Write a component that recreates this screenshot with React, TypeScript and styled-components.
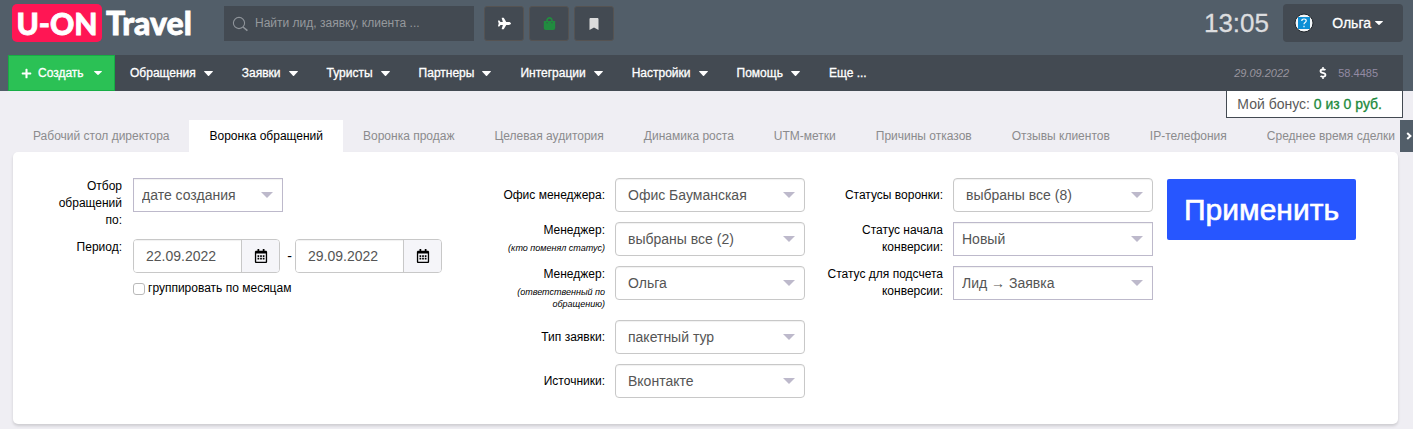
import React from "react";
import styled, { createGlobalStyle, css } from "styled-components";
import { FaPlane, FaShoppingBag, FaBookmark, FaPlus, FaRegCalendarAlt, FaDollarSign } from "react-icons/fa";

const GlobalStyle = createGlobalStyle`
  *, *::before, *::after { box-sizing: border-box; }
  body {
    margin: 0;
    background: #efeef3;
    color: #000;
    font: 12px/17px "Liberation Sans", Arial, sans-serif;
  }
  button, input, select { font: inherit; color: inherit; margin: 0; }
  a { color: inherit; text-decoration: none; }
`;

const Header = styled.header`
  position: relative;
  background: #525e69;
`;

const TopBar = styled.div`
  display: flex;
  align-items: flex-start;
  height: 55px;
  padding: 4px 10px 0 12px;
`;

const Logo = styled.a`
  display: flex;
  align-items: center;
  flex: 0 0 212px;
  gap: 4px;
  height: 38px;
  color: #fff;
  font: 900 32px/38px Lato, sans-serif;
  -webkit-text-stroke: 0.8px;
`;

const LogoBadge = styled.span`
  width: 90px;
  border-radius: 5px;
  background: #ff1654;
  font-size: 30px;
  text-align: center;
`;

const Search = styled.label`
  display: flex;
  align-items: center;
  flex: 0 1 250px;
  gap: 6px;
  height: 35px;
  margin: 2px 10px 0 0;
  padding: 0 8px;
  background: #434a52;
  color: #8f949a;
`;

const SearchInput = styled.input`
  flex: 1;
  min-width: 0;
  padding: 0;
  border: 0;
  outline: 0;
  background: none;
  &::placeholder { color: #96999d; opacity: 1; }
`;

const QuickActions = styled.div`
  display: flex;
  gap: 5px;
  margin-top: 2px;
`;

const QuickButton = styled.button<{ $tone: string }>`
  display: flex;
  align-items: center;
  justify-content: center;
  width: 40px;
  height: 35px;
  padding: 0;
  border: 1px solid #555352;
  border-radius: 3px;
  background: #434a52;
  color: ${(p) => p.$tone};
`;

const Clock = styled.time`
  margin: 0 14px 0 auto;
  color: #dcdddf;
  font-size: 26px;
  line-height: 38px;
  -webkit-text-stroke: 0.3px;
`;

const UserButton = styled.button`
  display: flex;
  align-items: center;
  width: 120px;
  height: 38px;
  padding: 0 20px 0 11px;
  border: 0;
  border-radius: 4px;
  background: #434a52;
  color: #fff;
  font-size: 14px;
  -webkit-text-stroke: 0.3px;
`;

const UserName = styled.span`
  margin: 0 4px 0 auto;
`;

const NavBar = styled.nav`
  display: flex;
  align-items: stretch;
  height: 36px;
  margin: 0 10px 0 8px;
  background: #434a52;
  color: #fff;
`;

const CreateButton = styled.button`
  display: flex;
  align-items: center;
  width: 107px;
  padding: 0 12px;
  border: 1px solid #17ad45;
  background: #2bc155;
  gap: 6px;
  -webkit-text-stroke: 0.3px;
  & > :last-child { margin-left: auto; }
`;

const NavLink = styled.a`
  display: flex;
  align-items: center;
  gap: 8px;
  padding: 0 14px 0 15px;
  white-space: nowrap;
  -webkit-text-stroke: 0.3px;
`;

const Rates = styled.div`
  display: flex;
  align-items: center;
  margin-left: auto;
  padding-right: 25px;
  color: #99959f;
  font-size: 11px;
`;

const RateDate = styled.em`
  margin-right: 28px;
`;

const Currency = styled.span`
  display: flex;
  margin-right: 9px;
  color: #fff;
`;

const RateValue = styled.span`
  color: #938ba3;
`;

const Bonus = styled.div`
  position: absolute;
  top: 100%;
  right: 10px;
  padding: 0 20px 0 10px;
  border: 1px solid #434a52;
  border-top: 0;
  background: #fff;
  color: #5a5a5a;
  font-size: 14px;
  line-height: 26px;
  b { color: #1d8a3c; font-weight: 400; -webkit-text-stroke: 0.3px; }
`;

const TabStrip = styled.nav`
  display: flex;
  height: 32px;
  margin-top: 29px;
  padding-left: 13px;
`;

const TabList = styled.div`
  display: flex;
  flex: 1;
  min-width: 0;
  overflow: hidden;
`;

const Tab = styled.a<{ $active?: boolean }>`
  flex: none;
  padding: 0 20px;
  color: ${(p) => (p.$active ? "#000" : "#8b8b8d")};
  background: ${(p) => (p.$active ? "#fff" : "transparent")};
  line-height: 32px;
  white-space: nowrap;
`;

const TabScroll = styled.button`
  display: flex;
  align-items: center;
  justify-content: center;
  flex: 0 0 13px;
  padding: 0 0 0 4px;
  border: 0;
  background: #525e69;
  color: #fff;
`;

const Panel = styled.form`
  display: grid;
  grid-template-columns: 450fr 342fr 348fr 245fr;
  align-items: start;
  min-height: 272px;
  margin: 0 15px 5px 13px;
  padding: 26px 0;
  border-radius: 5px;
  background: #fff;
  box-shadow: 0 2px 3px rgba(0, 0, 0, 0.14);
`;

const Column = styled.div`
  display: grid;
  gap: 10px;
`;

const Row = styled.div<{ $control: number }>`
  display: grid;
  grid-template-columns: minmax(0, 1fr) ${(p) => p.$control}px;
  column-gap: 10px;
  padding-left: 20px;
  align-items: start;
`;

const Label = styled.label<{ $lines?: number }>`
  padding-top: ${(p) => (p.$lines === 1 ? 9 : 0)}px;
  text-align: right;
`;

const Hint = styled.em`
  display: block;
  font-size: 9px;
  line-height: 12px;
  padding-top: 3px;
`;

const PeriodColumn = styled.div`
  display: grid;
  grid-template-columns: 75px max-content;
  align-items: start;
  gap: 10px 11px;
  padding-left: 34px;
`;

const SelectBox = styled.span<{ $width?: number }>`
  display: grid;
  grid-template-columns: minmax(0, 1fr) auto;
  align-items: center;
  ${(p) => p.$width && css`width: ${p.$width}px;`}
  & > svg {
    grid-area: 1 / 2;
    margin-right: 10px;
    pointer-events: none;
  }
`;

const NativeSelect = styled.select<{ $square?: boolean }>`
  grid-area: 1 / 1 / 2 / 3;
  appearance: none;
  width: 100%;
  height: 34px;
  padding: 0 26px 0 ${(p) => (p.$square ? 8 : 12)}px;
  border: 1px solid ${(p) => (p.$square ? "#bdb9cb" : "#c8c8c8")};
  border-radius: ${(p) => (p.$square ? 0 : 4)}px;
  background: #fff;
  color: #555;
  font-size: 14px;
  box-shadow: inset 0 1px 1px rgba(0, 0, 0, 0.06);
`;

const PeriodRow = styled.div`
  display: flex;
  align-items: center;
`;

const Dash = styled.span`
  width: 15px;
  padding-left: 4px;
  text-align: center;
  font-size: 14px;
`;

const DateGroup = styled.div`
  display: flex;
  width: 147px;
  height: 34px;
  border: 1px solid #c8c8c8;
  border-radius: 4px;
  overflow: hidden;
`;

const DateInput = styled.input`
  flex: 1;
  min-width: 0;
  padding: 0 0 0 12px;
  border: 0;
  background: #fff;
  color: #555;
  font-size: 14px;
  box-shadow: inset 0 1px 1px rgba(0, 0, 0, 0.06);
`;

const DateButton = styled.button`
  display: flex;
  align-items: center;
  justify-content: center;
  width: 38px;
  padding: 0;
  border: 0;
  border-left: 1px solid #c8c8c8;
  background: #f5f5f9;
`;

const CheckLabel = styled.label`
  display: flex;
  align-items: center;
  grid-column: 2;
  gap: 3px;
  margin-top: -3px;
`;

const Checkbox = styled.input`
  appearance: none;
  width: 12px;
  height: 12px;
  border: 1px solid #b9b9b9;
  border-radius: 3px;
  background: #fff;
  &:checked { background: #2756ff; }
`;

const ApplyButton = styled.button`
  justify-self: start;
  margin: 1px 0 0 14px;
  padding: 0 17px;
  border: 0;
  border-radius: 2px;
  background: #2756ff;
  color: #fff;
  font-size: 30px;
  line-height: 61px;
  -webkit-text-stroke: 0.6px;
`;

const Caret = ({ width = 9, height = 5 }: { width?: number; height?: number }) => (
  <svg width={width} height={height} viewBox="0 0 10 6" preserveAspectRatio="none" aria-hidden>
    <path d="M.6 0h8.8q.9.3.3 1L5.6 5.6q-.6.6-1.2 0L.3 1Q-.3.3.6 0z" fill="currentColor" />
  </svg>
);

const SelectArrow = () => (
  <svg width="12" height="6" viewBox="0 0 12 6" aria-hidden>
    <path d="M0 0h12L6 6z" fill="#bdb9cb" />
  </svg>
);

const SearchIcon = () => (
  <svg width="17" height="16" viewBox="0 0 17 16" fill="none" stroke="currentColor" aria-hidden>
    <circle cx="7" cy="7" r="5.6" strokeWidth="1.1" />
    <path d="M11 11l4.4 3.6" strokeWidth="1.6" />
  </svg>
);

const HelpIcon = () => (
  <svg width="20" height="20" viewBox="0 0 20 20" aria-hidden>
    <circle cx="10" cy="10" r="9" fill="#f4f6f8" stroke="#20252a" strokeWidth="1" />
    <rect x="4" y="4" width="12" height="12" fill="#0d8fd6" />
    <path d="M7.8 8q0-2 2.2-2t2.2 1.8q0 1.1-1.1 1.7t-1.1 1.7M10 12.8v1.4" fill="none" stroke="#fff" strokeWidth="1.2" />
  </svg>
);

const ChevronIcon = () => (
  <svg width="6" height="8" viewBox="0 0 6 8" fill="none" aria-hidden>
    <path d="M1.2 1L4.4 4 1.2 7" stroke="currentColor" strokeWidth="2" />
  </svg>
);

type SelectProps = { id: string; value: string; square?: boolean; width?: number };

const Select = ({ id, value, square, width }: SelectProps) => (
  <SelectBox $width={width}>
    <NativeSelect id={id} $square={square} defaultValue={value}>
      <option>{value}</option>
    </NativeSelect>
    <SelectArrow />
  </SelectBox>
);

type Field = { id: string; label: string; value: string; hint?: string; square?: boolean; lines?: number };

const managerFields: Field[] = [
  { id: "office", label: "Офис менеджера:", value: "Офис Бауманская", lines: 1 },
  { id: "changed-by", label: "Менеджер:", hint: "(кто поменял статус)", value: "выбраны все (2)" },
  { id: "owner", label: "Менеджер:", hint: "(ответственный по обращению)", value: "Ольга" },
  { id: "type", label: "Тип заявки:", value: "пакетный тур", lines: 1 },
  { id: "source", label: "Источники:", value: "Вконтакте", lines: 1 },
];

const statusFields: Field[] = [
  { id: "statuses", label: "Статусы воронки:", value: "выбраны все (8)", lines: 1 },
  { id: "start", label: "Статус начала конверсии:", value: "Новый", square: true },
  { id: "target", label: "Статус для подсчета конверсии:", value: "Лид → Заявка", square: true },
];

const FieldColumn = ({ fields, control }: { fields: Field[]; control: number }) => (
  <Column>
    {fields.map((f) => (
      <Row key={f.id} $control={control}>
        <Label htmlFor={f.id} $lines={f.lines}>
          {f.label}
          {f.hint && <Hint>{f.hint}</Hint>}
        </Label>
        <Select id={f.id} value={f.value} square={f.square} />
      </Row>
    ))}
  </Column>
);

const DateField = ({ id, label, value }: { id: string; label: string; value: string }) => (
  <DateGroup>
    <DateInput id={id} aria-label={label} defaultValue={value} />
    <DateButton type="button" aria-label="Открыть календарь">
      <FaRegCalendarAlt size={14} />
    </DateButton>
  </DateGroup>
);

const menu = ["Обращения", "Заявки", "Туристы", "Партнеры", "Интеграции", "Настройки", "Помощь"];

const tabs = [
  "Рабочий стол директора",
  "Воронка обращений",
  "Воронка продаж",
  "Целевая аудитория",
  "Динамика роста",
  "UTM-метки",
  "Причины отказов",
  "Отзывы клиентов",
  "IP-телефония",
  "Среднее время сделки",
];

export default function App() {
  return (
    <>
      <GlobalStyle />
      <Header>
        <TopBar>
          <Logo href="#">
            <LogoBadge>U-ON</LogoBadge>
            <span>Travel</span>
          </Logo>
          <Search>
            <SearchIcon />
            <SearchInput aria-label="Поиск" placeholder="Найти лид, заявку, клиента ..." />
          </Search>
          <QuickActions>
            <QuickButton $tone="#fff" aria-label="Авиабилеты"><FaPlane size={13} /></QuickButton>
            <QuickButton $tone="#218c3f" aria-label="Магазин"><FaShoppingBag size={13} /></QuickButton>
            <QuickButton $tone="#dcdcdc" aria-label="Закладки"><FaBookmark size={12} /></QuickButton>
          </QuickActions>
          <Clock>13:05</Clock>
          <UserButton>
            <HelpIcon />
            <UserName>Ольга</UserName>
            <Caret width={8} height={4} />
          </UserButton>
        </TopBar>
        <NavBar>
          <CreateButton>
            <FaPlus size={11} />
            <span>Создать</span>
            <Caret width={8} height={4} />
          </CreateButton>
          {menu.map((m) => (
            <NavLink href="#" key={m}>
              {m}
              <Caret />
            </NavLink>
          ))}
          <NavLink href="#">Еще ...</NavLink>
          <Rates>
            <RateDate>29.09.2022</RateDate>
            <Currency><FaDollarSign size={12} /></Currency>
            <RateValue>58.4485</RateValue>
          </Rates>
        </NavBar>
        <Bonus>
          Мой бонус: <b>0 из 0 руб.</b>
        </Bonus>
      </Header>

      <TabStrip>
        <TabList>
          {tabs.map((t, i) => (
            <Tab href="#" key={t} $active={i === 1}>{t}</Tab>
          ))}
        </TabList>
        <TabScroll aria-label="Следующие вкладки"><ChevronIcon /></TabScroll>
      </TabStrip>

      <Panel onSubmit={(e) => e.preventDefault()}>
        <PeriodColumn>
          <Label htmlFor="filter-by">Отбор обращений по:</Label>
          <Select id="filter-by" value="дате создания" square width={150} />
          <Label htmlFor="date-from">Период:</Label>
          <PeriodRow>
            <DateField id="date-from" label="Период с" value="22.09.2022" />
            <Dash>-</Dash>
            <DateField id="date-to" label="Период по" value="29.09.2022" />
          </PeriodRow>
          <CheckLabel>
            <Checkbox type="checkbox" />
            группировать по месяцам
          </CheckLabel>
        </PeriodColumn>
        <FieldColumn fields={managerFields} control={190} />
        <FieldColumn fields={statusFields} control={200} />
        <ApplyButton type="submit">Применить</ApplyButton>
      </Panel>
    </>
  );
}
